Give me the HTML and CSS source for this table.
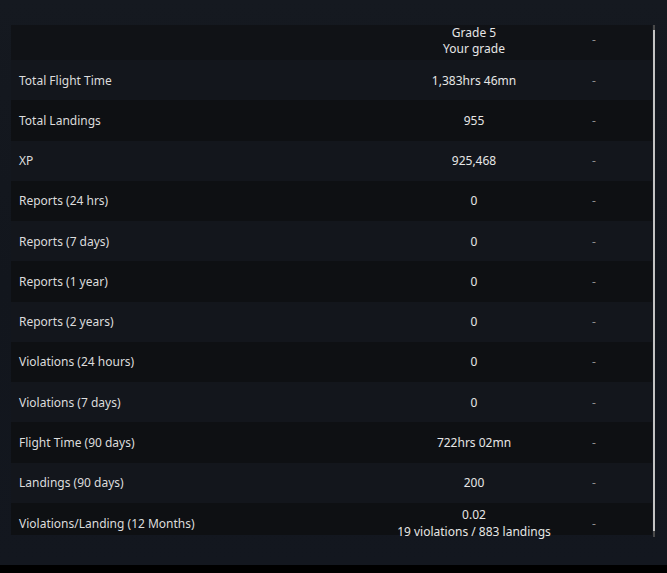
FILE: index.html
```html
<!DOCTYPE html>
<html>
<head>
<meta charset="utf-8">
<link rel="stylesheet" href="styles.css">
</head>
<body>
<div class="page">
  <div class="panel">
    <div class="scroller">
      <div class="table">
        <div class="row row-first"><div class="label"></div><div class="value">Grade 5<br>Your grade</div><div class="dash">-</div></div>
        <div class="row"><div class="label">Total Flight Time</div><div class="value">1,383hrs 46mn</div><div class="dash">-</div></div>
        <div class="row"><div class="label">Total Landings</div><div class="value">955</div><div class="dash">-</div></div>
        <div class="row"><div class="label">XP</div><div class="value">925,468</div><div class="dash">-</div></div>
        <div class="row"><div class="label">Reports (24 hrs)</div><div class="value">0</div><div class="dash">-</div></div>
        <div class="row"><div class="label">Reports (7 days)</div><div class="value">0</div><div class="dash">-</div></div>
        <div class="row"><div class="label">Reports (1 year)</div><div class="value">0</div><div class="dash">-</div></div>
        <div class="row"><div class="label">Reports (2 years)</div><div class="value">0</div><div class="dash">-</div></div>
        <div class="row"><div class="label">Violations (24 hours)</div><div class="value">0</div><div class="dash">-</div></div>
        <div class="row"><div class="label">Violations (7 days)</div><div class="value">0</div><div class="dash">-</div></div>
        <div class="row"><div class="label">Flight Time (90 days)</div><div class="value">722hrs 02mn</div><div class="dash">-</div></div>
        <div class="row"><div class="label">Landings (90 days)</div><div class="value">200</div><div class="dash">-</div></div>
        <div class="row row-last"><div class="label">Violations/Landing (12 Months)</div><div class="value">0.02<br>19 violations / 883 landings</div><div class="dash">-</div></div>
      </div>
      <div class="scrollbar"><div class="thumb"></div></div>
    </div>
  </div>
</div>
<div class="footer"></div>
</body>
</html>
```

FILE: styles.css
```css
html, body {
  margin: 0;
  padding: 0;
}
body {
  width: 667px;
  height: 573px;
  overflow: hidden;
  background: #000;
  font-family: "Noto Sans", "Open Sans", sans-serif;
  font-size: 12px;
  color: #dedede;
}
.page {
  height: 565px;
  background: linear-gradient(180deg, #151920 0%, #12161d 50%, #13171f 100%);
}
.panel {
  padding: 25px 12px 0 11px;
}
.scroller {
  height: 512px;
  display: flex;
}
.table {
  flex: 1;
  height: 510px;
}
.row {
  display: grid;
  grid-template-columns: 1fr 180px 60px;
  padding-right: 28px;
  height: 40.25px;
  align-items: center;
  line-height: 17px;
}
.row:nth-child(odd) {
  background: #0e1013;
}
.row:nth-child(even) {
  background: #13161c;
}
.row.row-first {
  height: 35px;
  align-items: start;
  line-height: 16px;
  background: #101216;
}
.row-first .dash {
  padding-top: 7px;
}
.row.row-last {
  height: 32.25px;
  align-items: start;
}
.row-last .value {
  padding-top: 2.75px;
}
.row-last .label,
.row-last .dash {
  padding-top: 11.75px;
}
.label {
  padding-left: 8px;
  color: #dcdcdc;
}
.value {
  text-align: center;
  white-space: nowrap;
  color: #e6e6e6;
}
.dash {
  text-align: center;
  color: #8e8e8e;
}
.scrollbar {
  width: 2px;
  margin-left: 1px;
  background: #4a4a4a;
  display: flex;
  flex-direction: column;
}
.thumb {
  flex: 1;
  margin-top: 5px;
  margin-bottom: 6px;
  background: #c4c4c4;
}
.footer {
  height: 8px;
  background: #000;
}
```
